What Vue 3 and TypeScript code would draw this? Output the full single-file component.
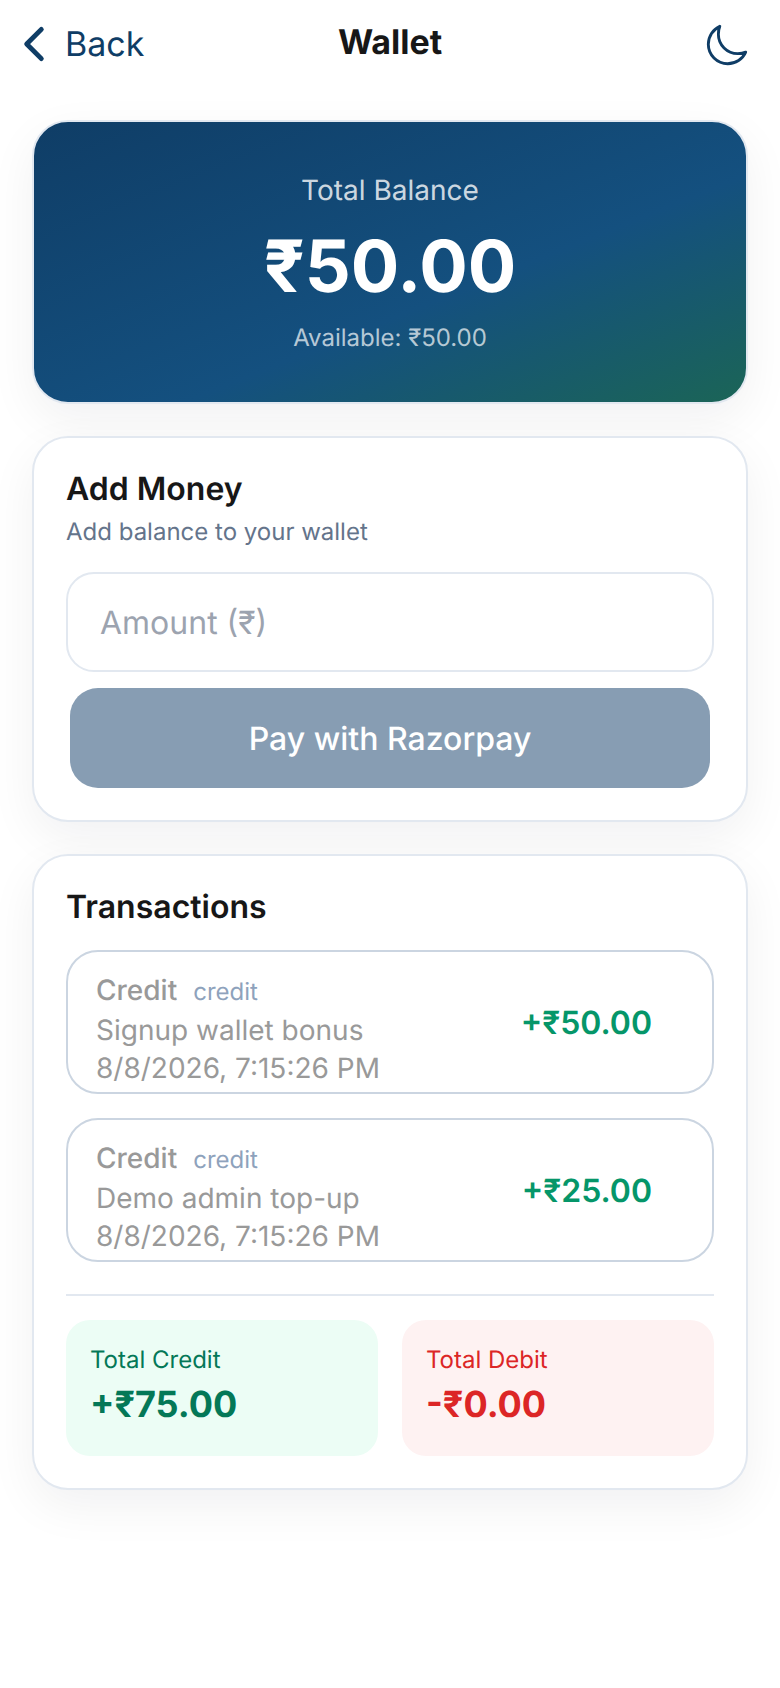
<template>
  <div class="wallet-page">
    <header class="top-bar">
      <button class="back-btn">
        <svg class="back-btn__icon" viewBox="0 0 512 512" fill="none">
          <path d="M328 112L184 256l144 144" stroke="currentColor" stroke-width="48" stroke-linecap="round" stroke-linejoin="round" />
        </svg>
        <span>Back</span>
      </button>
      <h1 class="top-bar__title">Wallet</h1>
      <svg class="theme-icon" viewBox="0 0 512 512" fill="none">
        <path
          d="M160 136c0-30.62 4.51-61.61 16-88C99.57 81.27 48 159.32 48 248c0 119.29 96.71 216 216 216 88.68 0 166.73-51.57 200-128-26.39 11.49-57.38 16-88 16-119.29 0-216-96.71-216-216z"
          stroke="currentColor"
          stroke-width="32"
          stroke-linecap="round"
          stroke-linejoin="round"
        />
      </svg>
    </header>

    <main class="content">
      <section class="balance-card">
        <div class="balance-card__label">Total Balance</div>
        <div class="balance-card__value">₹50.00</div>
        <div class="balance-card__sub">Available: ₹50.00</div>
      </section>

      <section class="panel">
        <h2 class="panel__title">Add Money</h2>
        <p class="panel__copy">Add balance to your wallet</p>
        <input class="amount-input" placeholder="Amount (₹)" />
        <button class="pay-btn">Pay with Razorpay</button>
      </section>

      <section class="panel">
        <h2 class="panel__title">Transactions</h2>
        <div class="tx-list">
          <article v-for="tx in transactions" :key="tx.note" class="tx-card">
            <div class="tx-card__info">
              <div class="tx-card__head">
                <span class="tx-card__name">Credit</span>
                <span class="tx-card__type">credit</span>
              </div>
              <div class="tx-card__line">{{ tx.note }}</div>
              <div class="tx-card__line">{{ tx.date }}</div>
            </div>
            <div class="tx-card__amount">{{ tx.amount }}</div>
          </article>
        </div>
        <div class="summary">
          <div class="summary__box summary__box--credit">
            <div class="summary__label">Total Credit</div>
            <div class="summary__value">+₹75.00</div>
          </div>
          <div class="summary__box summary__box--debit">
            <div class="summary__label">Total Debit</div>
            <div class="summary__value">-₹0.00</div>
          </div>
        </div>
      </section>
    </main>
  </div>
</template>

<script setup lang="ts">
const transactions = [
  { note: "Signup wallet bonus", date: "8/8/2026, 7:15:26 PM", amount: "+₹50.00" },
  { note: "Demo admin top-up", date: "8/8/2026, 7:15:26 PM", amount: "+₹25.00" },
];
</script>

<style>
html,
body {
  margin: 0;
  background: #fff;
}
</style>

<style scoped>
.wallet-page {
  width: 780px;
  min-height: 1688px;
  box-sizing: border-box;
  background: #fff;
  font-family: Inter, "Liberation Sans", sans-serif;
  color: #171717;
  text-rendering: geometricPrecision;
}

.top-bar {
  display: flex;
  align-items: center;
  justify-content: space-between;
  height: 88px;
  padding: 0 30px 0 8px;
  position: relative;
}

.back-btn {
  display: flex;
  align-items: center;
  gap: 5px;
  padding: 0;
  border: 0;
  background: none;
  color: #0f3d66;
  font: 400 34px Inter, sans-serif;
  text-rendering: geometricPrecision;
}

.back-btn__icon {
  width: 52px;
  height: 52px;
}

.top-bar__title {
  position: absolute;
  left: 0;
  right: 0;
  margin: 0;
  padding-bottom: 4px;
  text-align: center;
  font-size: 34px;
  font-weight: 700;
  pointer-events: none;
}

.theme-icon {
  width: 46px;
  height: 46px;
  margin-top: 1px;
  color: #0f3d66;
}

.content {
  display: flex;
  flex-direction: column;
  gap: 32px;
  padding: 32px 32px 0;
}

.balance-card {
  box-sizing: border-box;
  height: 284px;
  padding-top: 50px;
  border: 2px solid #e2e8f0;
  border-radius: 36px;
  background: linear-gradient(158deg, #0f3d66 0%, #14507f 60%, #1b6556 100%);
  background-origin: border-box;
  text-align: center;
  box-shadow: 0 16px 48px rgba(15, 23, 42, 0.06);
}

.balance-card__label {
  color: rgba(255, 255, 255, 0.8);
  font-size: 28px;
  line-height: 36px;
}

.balance-card__value {
  margin-top: 17px;
  color: #fff;
  font-size: 72px;
  line-height: 84px;
  font-weight: 700;
}

.balance-card__sub {
  margin-top: 13px;
  color: rgba(255, 255, 255, 0.7);
  font-size: 24px;
  line-height: 32px;
}

.panel {
  padding: 29px 32px 32px;
  border: 2px solid #e2e8f0;
  border-radius: 36px;
  background: #fff;
  box-shadow: 0 16px 48px rgba(15, 23, 42, 0.06);
}

.panel__title {
  margin: 0;
  font-size: 32px;
  line-height: 44px;
  font-weight: 600;
}

.panel__copy {
  margin: 5px 0 24px;
  color: #64748b;
  font-size: 24px;
  line-height: 32px;
}

.amount-input {
  display: block;
  box-sizing: border-box;
  width: 100%;
  height: 100px;
  padding: 0 32px;
  border: 2px solid #e2e8f0;
  border-radius: 28px;
  background: #fff;
  font: 400 32px Inter, sans-serif;
  text-rendering: geometricPrecision;
  outline: none;
}

.amount-input::placeholder {
  color: #9ca3af;
}

.pay-btn {
  display: block;
  width: calc(100% - 8px);
  height: 100px;
  margin: 16px 4px 0;
  border: 0;
  border-radius: 28px;
  background: #879db3;
  color: #fff;
  font: 500 32px Inter, sans-serif;
  text-rendering: geometricPrecision;
}

.tx-list {
  display: flex;
  flex-direction: column;
  gap: 24px;
  margin-top: 21px;
}

.tx-card {
  display: flex;
  align-items: center;
  justify-content: space-between;
  box-sizing: border-box;
  height: 144px;
  padding: 0 60px 0 28px;
  border: 2px solid #cbd5e1;
  border-radius: 32px;
  background: #fff;
}

.tx-card__info {
  padding-top: 13px;
}

.tx-card__head {
  display: flex;
  align-items: baseline;
  gap: 16px;
}

.tx-card__name {
  color: #999;
  font-size: 28px;
  line-height: 39px;
  font-weight: 500;
}

.tx-card__type {
  color: #8ea2bc;
  font-size: 24px;
  line-height: 39px;
}

.tx-card__line {
  color: #999;
  font-size: 28px;
  line-height: 38px;
}

.tx-card__amount {
  color: #059669;
  font-size: 32px;
  font-weight: 600;
}

.summary {
  display: grid;
  grid-template-columns: 1fr 1fr;
  gap: 24px;
  margin-top: 32px;
  padding-top: 24px;
  border-top: 2px solid #e2e8f0;
}

.summary__box {
  box-sizing: border-box;
  height: 136px;
  padding: 24px;
  border-radius: 24px;
}

.summary__box--credit {
  background: #ecfdf5;
  color: #047857;
}

.summary__box--debit {
  background: #fef2f2;
  color: #dc2626;
}

.summary__label {
  font-size: 24px;
  line-height: 32px;
}

.summary__value {
  margin-top: 4px;
  font-size: 36px;
  line-height: 48px;
  font-weight: 700;
}
</style>
